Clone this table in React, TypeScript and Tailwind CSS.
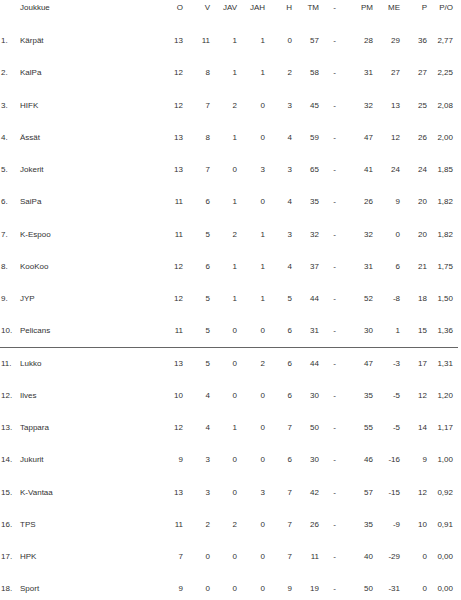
import React from "react";

type Row = [string, string, string, string, string, string, string, string, string, string, string, string];

const rows: Row[] = [
  ["1.", "Kärpät", "13", "11", "1", "1", "0", "57", "28", "29", "36", "2,77"],
  ["2.", "KalPa", "12", "8", "1", "1", "2", "58", "31", "27", "27", "2,25"],
  ["3.", "HIFK", "12", "7", "2", "0", "3", "45", "32", "13", "25", "2,08"],
  ["4.", "Ässät", "13", "8", "1", "0", "4", "59", "47", "12", "26", "2,00"],
  ["5.", "Jokerit", "13", "7", "0", "3", "3", "65", "41", "24", "24", "1,85"],
  ["6.", "SaiPa", "11", "6", "1", "0", "4", "35", "26", "9", "20", "1,82"],
  ["7.", "K-Espoo", "11", "5", "2", "1", "3", "32", "32", "0", "20", "1,82"],
  ["8.", "KooKoo", "12", "6", "1", "1", "4", "37", "31", "6", "21", "1,75"],
  ["9.", "JYP", "12", "5", "1", "1", "5", "44", "52", "-8", "18", "1,50"],
  ["10.", "Pelicans", "11", "5", "0", "0", "6", "31", "30", "1", "15", "1,36"],
  ["11.", "Lukko", "13", "5", "0", "2", "6", "44", "47", "-3", "17", "1,31"],
  ["12.", "Ilves", "10", "4", "0", "0", "6", "30", "35", "-5", "12", "1,20"],
  ["13.", "Tappara", "12", "4", "1", "0", "7", "50", "55", "-5", "14", "1,17"],
  ["14.", "Jukurit", "9", "3", "0", "0", "6", "30", "46", "-16", "9", "1,00"],
  ["15.", "K-Vantaa", "13", "3", "0", "3", "7", "42", "57", "-15", "12", "0,92"],
  ["16.", "TPS", "11", "2", "2", "0", "7", "26", "35", "-9", "10", "0,91"],
  ["17.", "HPK", "7", "0", "0", "0", "7", "11", "40", "-29", "0", "0,00"],
  ["18.", "Sport", "9", "0", "0", "0", "9", "19", "50", "-31", "0", "0,00"],
];

const grid =
  "grid grid-cols-[20px_1fr_27px_27px_27px_28px_27px_27px_17px_37px_27px_27px_26px] pr-[5px]";

function Cells({ r }: { r: Row }) {
  return (
    <>
      <div className="pl-[1px]">{r[0]}</div>
      <div>{r[1]}</div>
      <div className="text-right">{r[2]}</div>
      <div className="text-right">{r[3]}</div>
      <div className="text-right">{r[4]}</div>
      <div className="text-right">{r[5]}</div>
      <div className="text-right">{r[6]}</div>
      <div className="text-right">{r[7]}</div>
      <div className="text-right">-</div>
      <div className="text-right">{r[8]}</div>
      <div className="text-right">{r[9]}</div>
      <div className="text-right">{r[10]}</div>
      <div className="text-right">{r[11]}</div>
    </>
  );
}

export default function App() {
  return (
    <div
      className="w-[461px] h-[600px] overflow-hidden bg-white text-[#333] text-[8px] leading-[10px]"
      style={{ fontFamily: '"Liberation Sans", Arial, sans-serif' }}
    >
      <div className="w-[458px]">
        <div className={`${grid} h-[25px] items-start pt-[3px]`}>
          <div></div>
          <div>Joukkue</div>
          <div className="text-right">O</div>
          <div className="text-right">V</div>
          <div className="text-right">JAV</div>
          <div className="text-right">JAH</div>
          <div className="text-right">H</div>
          <div className="text-right">TM</div>
          <div className="text-right">-</div>
          <div className="text-right">PM</div>
          <div className="text-right">ME</div>
          <div className="text-right">P</div>
          <div className="text-right">P/O</div>
        </div>
        {rows.map((r, i) => (
          <div
            key={i}
            className={`${grid} h-[32.25px] items-center ${i === 9 ? "border-b border-[#666]" : ""}`}
          >
            <Cells r={r} />
          </div>
        ))}
      </div>
    </div>
  );
}
